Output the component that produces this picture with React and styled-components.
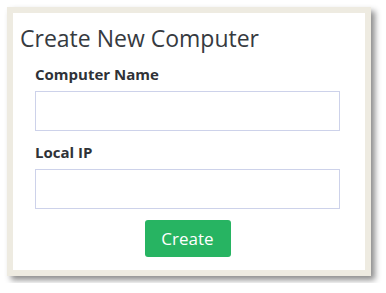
import React from 'react';
import styled, { createGlobalStyle } from 'styled-components';

const GlobalStyle = createGlobalStyle`
    body {
        margin: 0;
        background: #ffffff;
        font-family: "Open Sans", "Liberation Sans", sans-serif;
    }
`

function App() {
    return (
        <Page>
            <GlobalStyle />
            <Frame>
                <Panel>
                    <Title>Create New Computer</Title>
                    <Form onSubmit={e => e.preventDefault()}>
                        <Label htmlFor="name">Computer Name</Label>
                        <Input id="name" type="text" />
                        <Label htmlFor="ip">Local IP</Label>
                        <Input id="ip" type="text" />
                        <CreateButton type="submit">Create</CreateButton>
                    </Form>
                </Panel>
            </Frame>
        </Page>
    )
}

export default App

const Page = styled.div`
    padding: 7px;
`

const Frame = styled.div`
    box-sizing: border-box;
    width: 364px;
    padding: 6px;
    background-color: #eeebe1;
    box-shadow: 4px 4px 6px rgba(0, 0, 0, 0.45);
`

const Panel = styled.div`
    background-color: #ffffff;
    padding: 11px 0 13px 7px;
`

const Title = styled.h2`
    margin: 0;
    font-size: 23px;
    line-height: 29px;
    font-weight: 400;
    color: #363a3f;
`

const Form = styled.form`
    display: flex;
    flex-direction: column;
    width: 305px;
    margin: 11px 0 0 15px;
`

const Label = styled.label`
    font-size: 15px;
    line-height: 21px;
    font-weight: 700;
    color: #2f3237;
    margin-bottom: 6px;
`

const Input = styled.input`
    box-sizing: border-box;
    height: 40px;
    width: 100%;
    margin: 0 0 11px 0;
    border: 1px solid #cdd2ea;
    border-radius: 0;
    outline: none;
    font-family: inherit;
    font-size: 14px;
    padding: 0 10px;
`

const CreateButton = styled.button`
    align-self: center;
    width: 86px;
    height: 37px;
    border: none;
    border-radius: 3px;
    background-color: #27b462;
    color: #ffffff;
    font-family: inherit;
    font-size: 17px;
    cursor: pointer;
`
